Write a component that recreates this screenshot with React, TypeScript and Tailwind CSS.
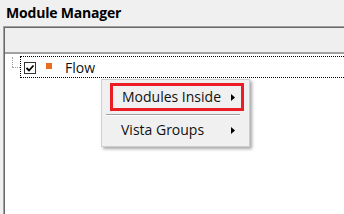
import React from 'react';

const font = { fontFamily: '"Open Sans", "Noto Sans", sans-serif' };

const SubArrow: React.FC = () => (
  <svg width="4" height="7" viewBox="0 0 4 7" className="block">
    <polygon points="0,0 4,3.5 0,7" fill="#000" />
  </svg>
);

const App: React.FC = () => {
  return (
    <div className="relative w-[344px] h-[214px] overflow-hidden bg-[#f0f0f0] flex flex-col" style={font}>
      <div className="h-[26px] pl-[6px] pt-[3px] text-[14px] leading-[19px] font-bold tracking-[-0.2px] text-black">
        Module Manager
      </div>

      <div className="ml-[3px] flex-1 flex flex-col border-l border-t border-[#a0a0a0]">
        <div className="flex-1 flex flex-col border-l border-t border-[#696969]">
          <div className="h-[26px] bg-[#efefef] border-b-2 border-[#a0a0a0]" />

          <div className="relative flex-1 bg-white">
            {/* tree connector */}
            <div className="absolute left-[7px] top-[3px] h-[10px] border-l border-dotted border-[#a0a0a0]" />
            <div className="absolute left-[7px] top-[13px] w-[8px] border-t border-dotted border-[#a0a0a0]" />

            {/* selected tree item */}
            <div className="absolute left-[15px] top-[2px] right-[-2px] h-[22px] border border-dotted border-black flex items-start">
              <div className="ml-[3px] mt-[5px] w-[12px] h-[12px] border border-[#333] bg-white flex items-center justify-center">
                <svg width="10" height="10" viewBox="0 0 10 10">
                  <polyline points="1.5,5 4,7.5 8.5,2.5" fill="none" stroke="#000" strokeWidth="1.8" />
                </svg>
              </div>
              <div className="ml-[10px] mt-[6px] w-[6px] h-[6px] bg-[#ea6f1c]" />
              <span className="ml-[13px] mt-[1px] text-[14px] leading-[20px] text-[#111]">Flow</span>
            </div>
          </div>
        </div>
      </div>

      {/* context menu */}
      <div className="absolute left-[101px] top-[79px] w-[149px] h-[68px] bg-[#f0f0f0] border border-[#cfcfcf] shadow-[2px_2px_3px_rgba(0,0,0,0.35)] flex flex-col">
        <div className="ml-[8px] mt-[3px] w-[134px] h-[28px] border-[3px] border-[#ec1c24] flex items-center justify-between pl-[9px] pr-[6px]">
          <span className="text-[14px] leading-[20px] text-[#111]">Modules Inside</span>
          <SubArrow />
        </div>
        <div className="ml-[4px] mt-[3px] w-[134px] border-t border-[#a0a0a0] border-b border-b-white" />
        <div className="ml-[8px] w-[134px] h-[28px] flex items-center justify-between pl-[11px] pr-[9px]">
          <span className="text-[14px] leading-[20px] text-[#111]">Vista Groups</span>
          <SubArrow />
        </div>
      </div>
    </div>
  );
};

export default App;
